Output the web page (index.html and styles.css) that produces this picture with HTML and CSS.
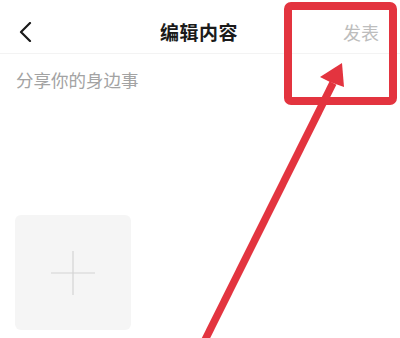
FILE: index.html
```html
<!DOCTYPE html>
<html lang="zh">
<head>
<meta charset="utf-8">
<link rel="stylesheet" href="styles.css">
</head>
<body>
<div class="page">
  <header class="nav">
    <div class="nav-left">
      <svg class="back" width="14" height="20" viewBox="0 0 14 20"><path d="M11 1 L2 10 L11 19" fill="none" stroke="#1a1a1a" stroke-width="2.2" stroke-linecap="round" stroke-linejoin="round"/></svg>
    </div>
    <div class="nav-title">编辑内容</div>
    <div class="nav-right">发表</div>
  </header>
  <main class="content">
    <div class="placeholder">分享你的身边事</div>
    <div class="upload">
      <svg width="46" height="46" viewBox="0 0 46 46"><path d="M23 1 V45 M1 23 H45" stroke="#d4d4d4" stroke-width="1.2"/></svg>
    </div>
  </main>
  <svg class="annot" width="400" height="338" viewBox="0 0 400 338">
    <rect x="288" y="6" width="105" height="95" rx="3" fill="none" stroke="#e3343f" stroke-width="8"/>
    <line x1="204" y1="342" x2="333" y2="83" stroke="#e3343f" stroke-width="7.5"/>
    <polygon points="342,63 320,77 330,82 344,87" fill="#e3343f"/>
  </svg>
</div>
</body>
</html>
```

FILE: styles.css
```css
html, body {
  margin: 0;
  padding: 0;
  background: #ffffff;
}
.page {
  position: relative;
  width: 400px;
  height: 338px;
  overflow: hidden;
  font-family: "Noto Sans CJK SC", "Noto Sans", sans-serif;
}
.nav {
  display: flex;
  align-items: center;
  justify-content: space-between;
  height: 43px;
  padding: 10px 21px 0 19px;
  border-bottom: 1px solid #f3f3f3;
}
.nav-left {
  width: 60px;
  display: flex;
  align-items: center;
}
.back {
  display: block;
}
.nav-title {
  font-size: 19px;
  font-weight: 700;
  color: #1a1a1a;
  letter-spacing: 0.5px;
}
.nav-right {
  width: 60px;
  text-align: right;
  font-size: 18px;
  color: #bdbdbd;
}
.content {
  padding: 14px 16px 0 16px;
}
.placeholder {
  font-size: 17.5px;
  line-height: 24px;
  color: #a3a3a3;
}
.upload {
  margin-top: 123px;
  width: 116px;
  height: 115px;
  border-radius: 6px;
  background: #f5f5f5;
  display: flex;
  align-items: center;
  justify-content: center;
  margin-left: -1px;
}
.annot {
  position: absolute;
  left: 0;
  top: 0;
  pointer-events: none;
}
```
